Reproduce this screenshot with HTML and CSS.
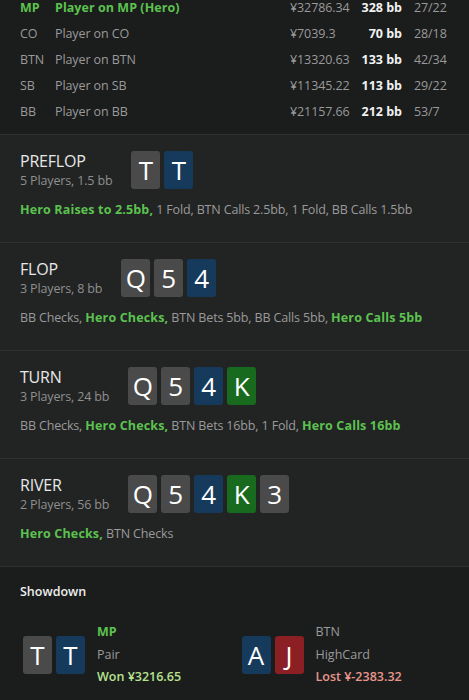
FILE: index.html
```html
<!DOCTYPE html>
<html>
<head>
<meta charset="utf-8">
<link rel="stylesheet" href="styles.css">
</head>
<body>
<div class="page">
  <div class="players">
    <div class="prow hero"><span class="pos">MP</span><span class="name">Player on MP (Hero)</span><span class="amt">¥32786.34</span><span class="bb">328 bb</span><span class="ratio">27/22</span></div>
    <div class="prow"><span class="pos">CO</span><span class="name">Player on CO</span><span class="amt">¥7039.3</span><span class="bb">70 bb</span><span class="ratio">28/18</span></div>
    <div class="prow"><span class="pos">BTN</span><span class="name">Player on BTN</span><span class="amt">¥13320.63</span><span class="bb">133 bb</span><span class="ratio">42/34</span></div>
    <div class="prow"><span class="pos">SB</span><span class="name">Player on SB</span><span class="amt">¥11345.22</span><span class="bb">113 bb</span><span class="ratio">29/22</span></div>
    <div class="prow"><span class="pos">BB</span><span class="name">Player on BB</span><span class="amt">¥21157.66</span><span class="bb">212 bb</span><span class="ratio">53/7</span></div>
  </div>

  <section class="street">
    <div class="head">
      <div class="titles"><div class="title">PREFLOP</div><div class="sub">5 Players, 1.5 bb</div></div>
      <div class="cards"><span class="card grey">T</span><span class="card blue">T</span></div>
    </div>
    <div class="actions"><b>Hero Raises to 2.5bb,</b> 1 Fold, BTN Calls 2.5bb, 1 Fold, BB Calls 1.5bb</div>
  </section>

  <section class="street">
    <div class="head">
      <div class="titles"><div class="title">FLOP</div><div class="sub">3 Players, 8 bb</div></div>
      <div class="cards"><span class="card grey">Q</span><span class="card grey">5</span><span class="card blue">4</span></div>
    </div>
    <div class="actions">BB Checks, <b>Hero Checks,</b> BTN Bets 5bb, BB Calls 5bb, <b>Hero Calls 5bb</b></div>
  </section>

  <section class="street">
    <div class="head">
      <div class="titles"><div class="title">TURN</div><div class="sub">3 Players, 24 bb</div></div>
      <div class="cards"><span class="card grey">Q</span><span class="card grey">5</span><span class="card blue">4</span><span class="card green">K</span></div>
    </div>
    <div class="actions">BB Checks, <b>Hero Checks,</b> BTN Bets 16bb, 1 Fold, <b>Hero Calls 16bb</b></div>
  </section>

  <section class="street">
    <div class="head">
      <div class="titles"><div class="title">RIVER</div><div class="sub">2 Players, 56 bb</div></div>
      <div class="cards"><span class="card grey">Q</span><span class="card grey">5</span><span class="card blue">4</span><span class="card green">K</span><span class="card grey">3</span></div>
    </div>
    <div class="actions"><b>Hero Checks,</b> BTN Checks</div>
  </section>

  <section class="showdown">
    <div class="sd-title">Showdown</div>
    <div class="sd-grid">
      <div class="sd-player">
        <div class="cards"><span class="card grey">T</span><span class="card blue">T</span></div>
        <div class="sd-info"><div class="sd-pos win">MP</div><div class="sd-hand">Pair</div><div class="sd-res won">Won ¥3216.65</div></div>
      </div>
      <div class="sd-player">
        <div class="cards"><span class="card blue">A</span><span class="card red">J</span></div>
        <div class="sd-info"><div class="sd-pos">BTN</div><div class="sd-hand">HighCard</div><div class="sd-res lost">Lost ¥-2383.32</div></div>
      </div>
    </div>
  </section>
</div>
</body>
</html>
```

FILE: styles.css
```css
* { box-sizing: border-box; }
html, body { margin: 0; padding: 0; background: #1b1c1c; }
body { font-family: "Open Sans", "Noto Sans", sans-serif; font-size: 12.5px; color: #9a9a9a; overflow: hidden; }
.page { width: 469px; height: 700px; overflow: hidden; }

.players { margin-top: -6px; padding-bottom: 10px; border-bottom: 1px solid #303232; }
.prow { display: grid; grid-template-columns: 35px 235px 70px 42px 12px 40px; height: 26px; align-items: center; padding-left: 20px; white-space: nowrap; letter-spacing: -0.1px; }
.prow .bb { color: #f2f2f2; font-weight: 700; text-align: right; letter-spacing: 0; }
.prow .ratio { grid-column: 6; }
.prow.hero .pos, .prow.hero .name { color: #5cc24f; font-weight: 700; letter-spacing: 0.05px; }

.street { background: #222424; border-bottom: 1px solid #303232; height: 108px; padding: 16px 20px 0; }
.head { display: flex; align-items: center; gap: 19px; height: 38px; }
.titles { display: flex; flex-direction: column; }
.title { font-size: 16px; color: #e8e8e8; line-height: 21px; letter-spacing: -0.2px; }
.sub { font-size: 12.5px; color: #8f8f8f; line-height: 17px; letter-spacing: -0.15px; }
.cards { display: flex; gap: 4px; }
.card { width: 29px; height: 38px; border-radius: 3px; display: flex; align-items: center; justify-content: center; color: #ffffff; font-size: 26px; line-height: 1; }
.card.grey { background: #4a4a4a; }
.card.blue { background: #163a5c; }
.card.green { background: #186a1f; }
.card.red { background: #8b1f24; }
.actions { margin-top: 13px; line-height: 16px; white-space: nowrap; letter-spacing: -0.15px; }
.actions b { color: #5cc24f; font-weight: 700; letter-spacing: 0.15px; }

.showdown { background: #1b1d1d; padding: 16px 20px 0; height: 134px; }
.sd-title { color: #eeeeee; font-size: 12.5px; font-weight: 600; line-height: 18px; }
.sd-grid { display: grid; grid-template-columns: 1fr 1fr; gap: 8px; margin-top: 20px; }
.sd-player { display: flex; align-items: center; gap: 12px; padding-left: 3px; }
.sd-info { display: flex; flex-direction: column; line-height: 22.5px; font-size: 12.5px; }
.sd-pos.win { color: #5cc24f; font-weight: 700; }
.sd-res { font-weight: 600; }
.sd-res.won { color: #b8e28f; }
.sd-res.lost { color: #e8968c; }
```
